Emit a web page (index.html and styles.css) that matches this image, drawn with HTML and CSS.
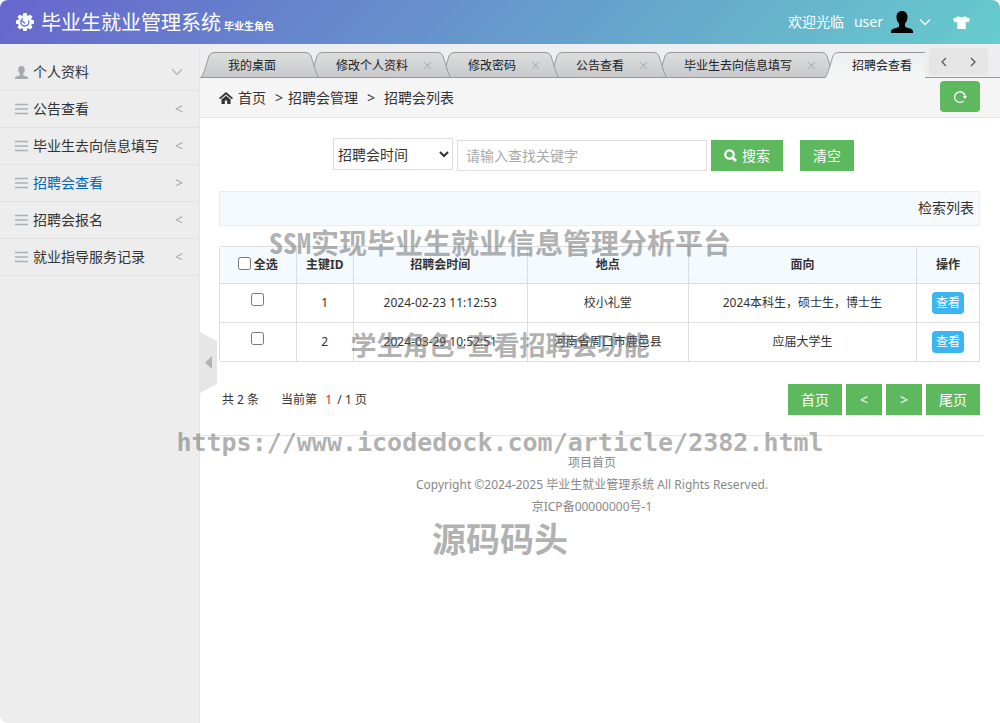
FILE: index.html
```html
<!DOCTYPE html>
<html lang="zh-CN">
<head>
<meta charset="utf-8">
<title>毕业生就业管理系统</title>
<link rel="stylesheet" href="styles.css">
</head>
<body>
<svg class="defs" width="0" height="0" aria-hidden="true">
  <defs>
    <linearGradient id="tab-fill" x1="0" y1="0" x2="0" y2="26" gradientUnits="userSpaceOnUse"><stop offset="0" stop-color="#dcdedd"/><stop offset="1" stop-color="#c9c9cb"/></linearGradient>
    <linearGradient id="tab-fill-active" x1="0" y1="0" x2="0" y2="26" gradientUnits="userSpaceOnUse"><stop offset="0" stop-color="#eceff0"/><stop offset="1" stop-color="#f5f5f5"/></linearGradient>
  </defs>
  <symbol id="slope-left" viewBox="0 0 14 26"><path d="M1 26C4 22 6 13 9 4Q10.500 .5 14 .5V26Z" stroke="none"/><path d="M1 25.500H14" class="base"/><path d="M1 26C4 22 6 13 9 4Q10.500 .5 14 .5" fill="none" stroke="#999"/></symbol>
  <symbol id="slope-right" viewBox="0 0 14 26"><path d="M13 26C10 22 8 13 5 4Q3.500 .5 0 .5V26Z" stroke="none"/><path d="M0 25.500H13" class="base"/><path d="M13 26C10 22 8 13 5 4Q3.500 .5 0 .5" fill="none" stroke="#999"/></symbol>
  <symbol id="bars" viewBox="0 0 13 12"><path d="M0 1.500H13M0 6H13M0 10.500H13" stroke="#a9b0b6" stroke-width="1.500"/></symbol>
  <symbol id="person" viewBox="0 0 22 22"><path d="M11 0C7.500 0 5.500 2.500 5.500 6C5.500 9 6.500 11 8 12.500V15C8 16 7 16.500 5 17C2 17.800 0 18.500 0 20.500V22H22V20.500C22 18.500 20 17.800 17 17C15 16.500 14 16 14 15V12.500C15.500 11 16.500 9 16.500 6C16.500 2.500 14.500 0 11 0Z"/></symbol>
  <symbol id="cross" viewBox="0 0 8 8"><path d="M1 1L7 7M7 1L1 7" fill="none" stroke="#adb3b6"/></symbol>
</svg>

<header class="header">
  <h1 class="brand">
    <svg class="brand-icon" viewBox="0 0 20 20" aria-hidden="true">
      <g fill="#fff"><circle cx="10" cy="10" r="7"/><rect x="8" y="1" width="4" height="18" rx="1"/><rect x="1" y="8" width="18" height="4" rx="1"/><rect x="8" y="1" width="4" height="18" rx="1" transform="rotate(45 10 10)"/><rect x="8" y="1" width="4" height="18" rx="1" transform="rotate(-45 10 10)"/></g>
      <path d="M8 6.500A4 4 0 1 0 13.500 8.500M6.800 8.500L10 11.500" fill="none" stroke="#6670cc" stroke-width="1.300"/>
    </svg>
    <span class="brand-name">毕业生就业管理系统</span>
    <small class="brand-role">毕业生角色</small>
  </h1>
  <div class="account">
    <span>欢迎光临</span>
    <button class="user" type="button">
      user
      <svg class="avatar" aria-hidden="true"><use href="#person"/></svg>
      <svg class="caret" viewBox="0 0 12 8" aria-hidden="true"><path d="M1 1.500L6 6.500L11 1.500" fill="none" stroke="#fff" stroke-width="1.500"/></svg>
    </button>
    <button class="skin" type="button" aria-label="换肤">
      <svg viewBox="0 0 16 12" aria-hidden="true"><path d="M5 0L0 2.500L1.500 6L4 5.200V12H12V5.200L14.500 6L16 2.500L11 0Q8 2.800 5 0Z" fill="#fff"/></svg>
    </button>
  </div>
</header>

<div class="body">
  <nav class="sidebar">
    <ul class="menu">
      <li><a href="#"><svg class="menu-icon person" aria-hidden="true"><use href="#person"/></svg><span>个人资料</span><svg class="fold" viewBox="0 0 12 8" aria-hidden="true"><path d="M1 1L6 6.500L11 1" fill="none" stroke="#b3b6b9" stroke-width="1.300"/></svg></a></li>
      <li><a href="#"><svg class="menu-icon" aria-hidden="true"><use href="#bars"/></svg><span>公告查看</span><i>&lt;</i></a></li>
      <li><a href="#"><svg class="menu-icon" aria-hidden="true"><use href="#bars"/></svg><span>毕业生去向信息填写</span><i>&lt;</i></a></li>
      <li><a class="current" href="#"><svg class="menu-icon" aria-hidden="true"><use href="#bars"/></svg><span>招聘会查看</span><i>&gt;</i></a></li>
      <li><a href="#"><svg class="menu-icon" aria-hidden="true"><use href="#bars"/></svg><span>招聘会报名</span><i>&lt;</i></a></li>
      <li><a href="#"><svg class="menu-icon" aria-hidden="true"><use href="#bars"/></svg><span>就业指导服务记录</span><i>&lt;</i></a></li>
    </ul>
  </nav>

  <main class="main">
    <button class="collapse" type="button" aria-label="收起菜单">
      <svg viewBox="0 0 17 62" aria-hidden="true"><path d="M0 0L17 9V52L0 61Z" fill="#e6e6e6"/><path d="M12 24V37L5 30.500Z" fill="#b3b3b3"/></svg>
    </button>

    <div class="tabbar">
      <ul class="tabs">
        <li class="tab"><svg class="edge" aria-hidden="true"><use href="#slope-left"/></svg><a href="#">我的桌面</a><svg class="edge" aria-hidden="true"><use href="#slope-right"/></svg></li>
        <li class="tab"><svg class="edge" aria-hidden="true"><use href="#slope-left"/></svg><a href="#">修改个人资料</a><svg class="edge" aria-hidden="true"><use href="#slope-right"/></svg><button type="button" aria-label="关闭"><svg aria-hidden="true"><use href="#cross"/></svg></button></li>
        <li class="tab"><svg class="edge" aria-hidden="true"><use href="#slope-left"/></svg><a href="#">修改密码</a><svg class="edge" aria-hidden="true"><use href="#slope-right"/></svg><button type="button" aria-label="关闭"><svg aria-hidden="true"><use href="#cross"/></svg></button></li>
        <li class="tab"><svg class="edge" aria-hidden="true"><use href="#slope-left"/></svg><a href="#">公告查看</a><svg class="edge" aria-hidden="true"><use href="#slope-right"/></svg><button type="button" aria-label="关闭"><svg aria-hidden="true"><use href="#cross"/></svg></button></li>
        <li class="tab"><svg class="edge" aria-hidden="true"><use href="#slope-left"/></svg><a href="#">毕业生去向信息填写</a><svg class="edge" aria-hidden="true"><use href="#slope-right"/></svg><button type="button" aria-label="关闭"><svg aria-hidden="true"><use href="#cross"/></svg></button></li>
        <li class="tab active"><svg class="edge" aria-hidden="true"><use href="#slope-left"/></svg><a href="#">招聘会查看</a><svg class="edge" aria-hidden="true"><use href="#slope-right"/></svg></li>
      </ul>
      <div class="tab-nav">
        <button type="button" aria-label="上一个"><svg viewBox="0 0 6 10" aria-hidden="true"><path d="M5 1L1 5L5 9"/></svg></button>
        <button type="button" aria-label="下一个"><svg viewBox="0 0 6 10" aria-hidden="true"><path d="M1 1L5 5L1 9"/></svg></button>
      </div>
    </div>

    <nav class="crumbs">
      <svg class="home" viewBox="0 0 14 12" aria-hidden="true"><path d="M7 0L0 6L1.200 7.300L7 2.500L12.800 7.300L14 6ZM7 3.800L2.500 7.500V12H5.800V8.500H8.200V12H11.500V7.500Z" fill="#333"/></svg>
      <a href="#">首页</a><span class="sep">&gt;</span><a href="#">招聘会管理</a><span class="sep wide">&gt;</span><span>招聘会列表</span>
      <button class="refresh" type="button" aria-label="刷新"><svg viewBox="0 0 14 14" aria-hidden="true"><path d="M10.500 11A5.300 5.300 0 1 1 12.200 6.500" fill="none" stroke="#fff" stroke-width="1.300"/><path d="M9.500 6H14L12.200 9Z" fill="#fff"/></svg></button>
    </nav>

    <div class="content">
      <form class="search">
        <select aria-label="查找字段"><option>招聘会时间</option></select>
        <input type="text" aria-label="关键字" placeholder="请输入查找关键字">
        <button class="btn find" type="button"><svg viewBox="0 0 13 13" aria-hidden="true"><circle cx="5.500" cy="5.500" r="4.200" fill="none" stroke="#fff" stroke-width="2.200"/><path d="M8.500 8.500L12 12" stroke="#fff" stroke-width="2.600"/></svg>搜索</button>
        <button class="btn clear" type="reset">清空</button>
      </form>

      <div class="list-bar">检索列表</div>

      <table class="list">
        <colgroup><col class="c-check"><col class="c-id"><col class="c-time"><col class="c-place"><col class="c-target"><col class="c-act"></colgroup>
        <thead>
          <tr><th><label><input type="checkbox">全选</label></th><th>主键ID</th><th>招聘会时间</th><th>地点</th><th>面向</th><th>操作</th></tr>
        </thead>
        <tbody>
          <tr><td><input type="checkbox" aria-label="选择 1"></td><td>1</td><td>2024-02-23 11:12:53</td><td>校小礼堂</td><td>2024本科生，硕士生，博士生</td><td><a class="view" href="#">查看</a></td></tr>
          <tr><td><input type="checkbox" aria-label="选择 2"></td><td>2</td><td>2024-03-29 10:52:51</td><td>河南省周口市鹿邑县</td><td>应届大学生</td><td><a class="view" href="#">查看</a></td></tr>
        </tbody>
      </table>

      <div class="pager">
        <span>共 2 条</span>
        <span class="page">当前第&nbsp; <b>1</b> / 1 页</span>
        <div class="pages">
          <button class="btn" type="button">首页</button>
          <button class="btn" type="button">&lt;</button>
          <button class="btn" type="button">&gt;</button>
          <button class="btn" type="button">尾页</button>
        </div>
      </div>
    </div>

    <footer class="footer">
      <a href="#">项目首页</a>
      <p>Copyright ©2024-2025 毕业生就业管理系统 All Rights Reserved.</p>
      <p>京ICP备00000000号-1</p>
    </footer>
  </main>
</div>

<div class="marks">
  <p class="mark title">SSM实现毕业生就业信息管理分析平台</p>
  <p class="mark feature">学生角色-查看招聘会功能</p>
  <p class="mark url">https://www.icodedock.com/article/2382.html</p>
  <p class="mark site">源码码头</p>
</div>
</body>
</html>
```

FILE: styles.css
```css
* { box-sizing: border-box; }

body {
  margin: 0;
  min-height: 100vh;
  display: flex;
  flex-direction: column;
  position: relative;
  background: #fff;
  color: #333;
  font: 14px/20px "Noto Sans", "Noto Sans CJK SC", sans-serif;
}

a { color: inherit; text-decoration: none; }
ul, p, h1 { margin: 0; padding: 0; list-style: none; }
button { border: 0; padding: 0; background: none; color: inherit; font: inherit; cursor: pointer; }
svg { display: block; flex: none; }
.defs { position: absolute; }

/* header */
.header {
  height: 44px;
  display: flex;
  align-items: center;
  justify-content: space-between;
  padding: 0 30px 0 15px;
  border-radius: 8px 8px 0 0;
  background: linear-gradient(135deg, #66c, #6cc);
  color: #fff;
}
.brand { display: flex; align-items: center; font-weight: 400; }
.brand-icon { width: 20px; height: 20px; margin-right: 6px; }
.brand-name { padding-top: 2px; font-size: 20px; line-height: 42px; }
.brand-role { margin: 8px 0 0 3px; font-size: 10px; font-weight: 700; }
.account { display: flex; align-items: center; }
.user { display: flex; align-items: center; margin-left: 10px; }
.avatar { width: 22px; height: 22px; margin: 0 6px 0 8px; fill: #000; }
.caret { width: 12px; height: 8px; }
.skin { margin-left: 22px; }
.skin svg { width: 17px; height: 13px; }

/* frame */
.body { flex: 1; display: flex; }
.sidebar {
  width: 200px;
  flex: none;
  padding-top: 10px;
  background: #ededed;
  border-right: 1px solid #e4e4e4;
  border-radius: 0 0 0 8px;
}
.menu a {
  height: 37px;
  display: flex;
  align-items: center;
  padding: 0 16px 0 15px;
  border-bottom: 1px solid #e2e2e2;
}
.menu .current { color: #06b; }
.menu-icon { width: 13px; height: 12px; margin-right: 5px; }
.menu-icon.person { height: 13px; fill: #a3a9ae; }
.menu i { margin-left: auto; color: #aaa; font-style: normal; }
.fold { width: 12px; height: 8px; margin-left: auto; }
.main { flex: 1; min-width: 0; position: relative; }
.collapse { position: absolute; left: 0; top: 288px; }
.collapse svg { width: 17px; height: 62px; }

/* tabs */
.tabbar {
  height: 34px;
  display: flex;
  padding-right: 12px;
  background: #eeeef0;
  border-bottom: 1px solid #999;
}
.tabs {
  flex: 1;
  min-width: 0;
  height: 34px;
  display: flex;
  padding-top: 8px;
  overflow: hidden;
}
.tab {
  flex: none;
  height: 26px;
  display: flex;
  position: relative;
  margin-right: -12px;
  font-size: 12px;
  fill: url(#tab-fill);
  stroke: #999;
}
.tab:nth-child(1) { z-index: 5; }
.tab:nth-child(2) { z-index: 4; }
.tab:nth-child(3) { z-index: 3; }
.tab:nth-child(4) { z-index: 2; }
.tab:nth-child(5) { z-index: 1; }
.tab.active { z-index: 6; fill: url(#tab-fill-active); stroke: none; }
.edge { width: 14px; height: 26px; }
.tab a {
  padding: 1px 30px 0 14px;
  border-top: 1px solid #999;
  border-bottom: 1px solid #999;
  background: linear-gradient(#dcdedd, #c9c9cb);
  color: #222;
  line-height: 24px;
}
.tab.active a { border-bottom: 0; background: linear-gradient(#eceff0, #f5f5f5); }
.tab button { position: absolute; right: 20px; top: 9px; }
.tab button svg { width: 9px; height: 9px; }
.tab-nav {
  width: 59px;
  height: 27px;
  flex: none;
  display: flex;
  align-items: center;
  justify-content: space-between;
  margin: 4px 0 0 4px;
  padding: 0 12px;
  border-radius: 4px;
  background: #e5e5e5;
}
.tab-nav svg { width: 6px; height: 10px; fill: none; stroke: #555; stroke-width: 1.2; }

/* breadcrumbs */
.crumbs {
  height: 40px;
  display: flex;
  align-items: center;
  padding: 0 20px 0 19px;
  background: #f5f5f5;
  border-bottom: 1px solid #e5e5e5;
}
.home { width: 14px; height: 12px; margin-right: 5px; }
.sep { margin: 0 5px 0 9px; }
.sep.wide { margin-right: 9px; }
.refresh {
  width: 40px;
  height: 31px;
  display: flex;
  align-items: center;
  justify-content: center;
  margin: -2px 0 0 auto;
  border-radius: 4px;
  background: #5eb95e;
}
.refresh svg { width: 14px; height: 14px; }

/* content */
.content { padding: 20px 20px 0 19px; }
.btn { height: 31px; padding: 0 13px; background: #5eb95e; color: #fff; }
.search { display: flex; align-items: flex-start; justify-content: center; padding-right: 12px; }
.search select {
  width: 120px;
  height: 32px;
  border: 1px solid #ddd;
  border-radius: 0;
  background: #fff;
  color: inherit;
  font: inherit;
}
.search input {
  width: 250px;
  height: 31px;
  margin: 2px 4px 0;
  padding: 0 8px;
  border: 1px solid #ddd;
  font: inherit;
}
.search input::placeholder { color: #aaa; opacity: 1; }
.search .btn { margin-top: 2px; }
.find { display: flex; align-items: center; }
.find svg { width: 13px; height: 13px; margin-right: 5px; }
.search .clear { margin-left: 17px; }
.list-bar {
  margin: 20px 0;
  padding: 6px 5px 7px;
  border: 1px solid #ececec;
  background: #f5fafe;
  text-align: right;
}
.list {
  width: 100%;
  table-layout: fixed;
  border-spacing: 0;
  border: 1px solid #ddd;
  border-width: 1px 0 0 1px;
  border-radius: 3px;
  font-size: 12px;
  text-align: center;
}
.c-check { width: 10.1%; }
.c-id { width: 7.5%; }
.c-time { width: 22.9%; }
.c-place { width: 21.2%; }
.c-target { width: 30%; }
.c-act { width: 8.3%; }
.list th, .list td { padding: 0; border: 1px solid #ddd; border-width: 0 1px 1px 0; }
.list th { height: 37px; background: #f5fafe; }
.list td { height: 39px; }
.list input { width: 13px; height: 13px; margin: 0; }
.list th input { margin-right: 3px; vertical-align: -1px; }
.list td input { vertical-align: 2px; }
.view {
  display: inline-block;
  padding: 1px 4px;
  border-radius: 4px;
  background: #3bb4f2;
  color: #fff;
}
.pager { display: flex; align-items: center; margin-top: 22px; padding-left: 3px; font-size: 12px; }
.page { margin-left: 22px; }
.page b { margin: 0 2px; color: #e22; font-weight: 400; }
.pages { display: flex; gap: 4px; margin-left: auto; font-size: 14px; }
.pages .btn { min-width: 36px; }

/* footer */
.footer {
  margin: 20px 16px 0 0;
  padding-top: 16px;
  border-top: 1px solid #e5e5e5;
  color: #888;
  font-size: 12px;
  line-height: 22px;
  text-align: center;
}

/* overlaid marks */
.marks { position: absolute; inset: 0; pointer-events: none; }
.mark {
  position: absolute;
  left: 0;
  right: 0;
  color: rgba(100, 100, 100, .5);
  font-family: "Noto Sans Mono CJK SC", "Noto Sans CJK SC", monospace;
  font-weight: 700;
  line-height: 40px;
  text-align: center;
  white-space: nowrap;
}
.title { top: 222px; font-size: 28px; }
.feature { top: 324px; font-size: 26px; }
.url { top: 423px; font-family: "DejaVu Sans Mono", monospace; font-size: 25px; }
.site { top: 518px; font-size: 34px; }
```
